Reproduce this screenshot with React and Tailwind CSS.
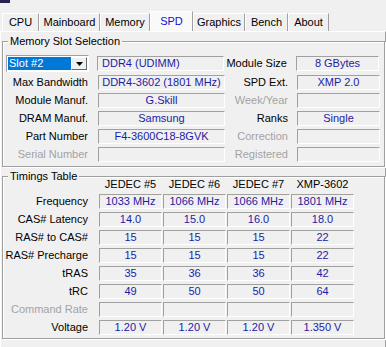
import React from 'react';

const sunk = 'border border-t-[#a0a0a0] border-l-[#a0a0a0] border-r-white border-b-white';
const valueText = 'text-[#1c1ca4]';
const dimText = 'text-[#a3a3a3]';

const tabs = [
  { name: 'CPU', w: 'w-[37px]' },
  { name: 'Mainboard', w: 'w-[61px]' },
  { name: 'Memory', w: 'w-[50px]' },
  { name: 'SPD', w: 'w-[43px]', active: true },
  { name: 'Graphics', w: 'w-[52px]' },
  { name: 'Bench', w: 'w-[43px]' },
  { name: 'About', w: 'w-[41px]' },
];

const slotRows = [
  { l1: 'Max Bandwidth', v1: 'DDR4-3602 (1801 MHz)', l2: 'SPD Ext.', v2: 'XMP 2.0' },
  { l1: 'Module Manuf.', v1: 'G.Skill', l2: 'Week/Year', v2: '', d2: true },
  { l1: 'DRAM Manuf.', v1: 'Samsung', l2: 'Ranks', v2: 'Single' },
  { l1: 'Part Number', v1: 'F4-3600C18-8GVK', l2: 'Correction', v2: '', d2: true },
  { l1: 'Serial Number', v1: '', d1: true, l2: 'Registered', v2: '', d2: true },
];

const timings = [
  { label: 'Frequency', vals: ['1033 MHz', '1066 MHz', '1066 MHz', '1801 MHz'] },
  { label: 'CAS# Latency', vals: ['14.0', '15.0', '16.0', '18.0'] },
  { label: 'RAS# to CAS#', vals: ['15', '15', '15', '22'] },
  { label: 'RAS# Precharge', vals: ['15', '15', '15', '22'] },
  { label: 'tRAS', vals: ['35', '36', '36', '42'] },
  { label: 'tRC', vals: ['49', '50', '50', '64'] },
  { label: 'Command Rate', vals: ['', '', '', ''], dim: true },
  { label: 'Voltage', vals: ['1.20 V', '1.20 V', '1.20 V', '1.350 V'] },
];

function Field({ w, children, left }) {
  return (
    <div className={`${w} h-[15px] ${sunk} ${valueText} flex items-center ${left ? 'justify-start pl-[4px]' : 'justify-center'} whitespace-nowrap leading-none`}>
      {children}
    </div>
  );
}

function Group({ title, className, children }) {
  return (
    <div className={`relative ml-[1px] w-[383px] border border-[#a0a0a0] shadow-[inset_1px_1px_0_#fff,1px_1px_0_#fff] ${className}`}>
      <span className="absolute -top-[8px] left-[5px] bg-[#f0f0f0] px-[2px] leading-[14px]">{title}</span>
      {children}
    </div>
  );
}

export default function App() {
  return (
    <div className="w-[386px] h-[347px] overflow-hidden bg-[#f0f0f0] text-[11px] text-black font-['Liberation_Sans',Arial,sans-serif]">
      <div className="h-[3px] w-[10px] bg-[#2c2150]" />
      <div className="h-[28px] flex items-end pl-[2px]">
        {tabs.map(t => (
          <div
            key={t.name}
            className={`${t.w} flex items-center justify-center border-t border-l border-r border-t-white border-l-white border-r-[#a0a0a0] ${t.active ? 'h-[20px] bg-[#f9f9f9] text-[#1010d0]' : 'h-[18px]'}`}
          >
            {t.name}
          </div>
        ))}
      </div>
      <div className="h-[316px] border-t border-l border-r border-t-white border-l-white border-r-[#a0a0a0] pt-[9px]">
        <Group title="Memory Slot Selection" className="pt-[13px] pb-[4px]">
          <div className="flex flex-col gap-[3px]">
            <div className="flex items-center h-[17px]">
              <div className={`ml-[3px] w-[83px] h-[17px] ${sunk} flex bg-white p-[1px]`}>
                <div className="flex-1 bg-[#0078d7] text-white flex items-center pl-[1px] leading-none">Slot #2</div>
                <div className="w-[16px] bg-[#f0f0f0] border border-t-white border-l-white border-r-[#696969] border-b-[#696969] flex items-center justify-center">
                  <svg width="7" height="4" viewBox="0 0 7 4"><path d="M0 0h7L3.5 4z" fill="#000" /></svg>
                </div>
              </div>
              <div className="ml-[8px]"><Field w="w-[127px]" left>DDR4 (UDIMM)</Field></div>
              <div className="w-[63px] text-right">Module Size</div>
              <div className="ml-[9px]"><Field w="w-[83px]">8 GBytes</Field></div>
            </div>
            {slotRows.map(r => (
              <div key={r.l1} className="flex items-center h-[15px]">
                <div className={`w-[85px] text-right ${r.d1 ? dimText : ''}`}>{r.l1}</div>
                <div className="ml-[10px]"><Field w="w-[127px]">{r.v1}</Field></div>
                <div className={`w-[63px] text-right ${r.d2 ? dimText : ''}`}>{r.l2}</div>
                <div className="ml-[9px]"><Field w="w-[83px]">{r.v2}</Field></div>
              </div>
            ))}
          </div>
        </Group>
        <Group title="Timings Table" className="mt-[9px] pb-[3px]">
          <div className="flex h-[15px] items-center">
            <div className="w-[85px]" />
            <div className="ml-[11px] flex gap-[1px]">
              {['JEDEC #5', 'JEDEC #6', 'JEDEC #7', 'XMP-3602'].map(h => (
                <div key={h} className="w-[63px] text-center">{h}</div>
              ))}
            </div>
          </div>
          <div className="mt-[2px] flex flex-col gap-[3px]">
            {timings.map(r => (
              <div key={r.label} className="flex items-center h-[15px]">
                <div className={`w-[85px] text-right ${r.dim ? dimText : ''}`}>{r.label}</div>
                <div className="ml-[11px] flex gap-[1px]">
                  {r.vals.map((v, i) => (
                    <Field key={i} w="w-[63px]">{v}</Field>
                  ))}
                </div>
              </div>
            ))}
          </div>
        </Group>
      </div>
    </div>
  );
}
